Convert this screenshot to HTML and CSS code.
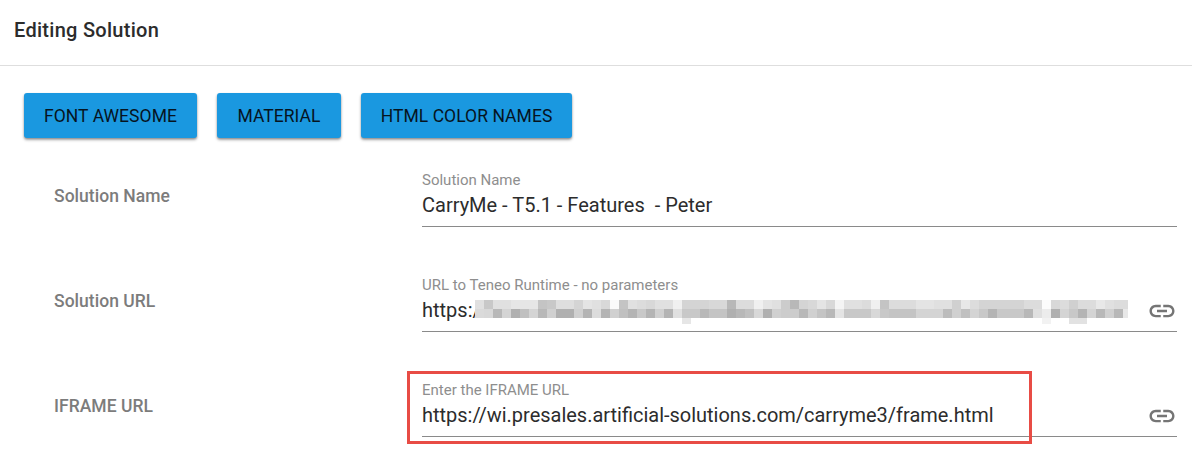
FILE: index.html
```html
<!DOCTYPE html>
<html lang="en">
<head>
<meta charset="utf-8">
<title>Editing Solution</title>
<link rel="stylesheet" href="styles.css">
</head>
<body>
<header class="title-bar"><h1 class="title">Editing Solution</h1></header>
<main class="content">
  <nav class="actions">
    <button class="btn btn-fa">FONT AWESOME</button>
    <button class="btn btn-material">MATERIAL</button>
    <button class="btn btn-colors">HTML COLOR NAMES</button>
  </nav>
  <section class="row">
    <div class="row-label">Solution Name</div>
    <div class="field">
      <div class="hint">Solution Name</div>
      <div class="value"><span class="text">CarryMe - T5.1 - Features&nbsp; - Peter</span></div>
    </div>
  </section>
  <section class="row">
    <div class="row-label">Solution URL</div>
    <div class="field">
      <div class="hint">URL to Teneo Runtime - no parameters</div>
      <div class="value"><span class="text">https:/</span>
        <svg class="mosaic" id="mosaic" width="653" height="24" shape-rendering="crispEdges"></svg>
        <svg class="link" viewBox="0 0 24 24"><path d="M3.9 12c0-1.71 1.39-3.1 3.1-3.1h4V7H7c-2.76 0-5 2.24-5 5s2.24 5 5 5h4v-1.9H7c-1.71 0-3.1-1.39-3.1-3.1zM8 13h8v-2H8v2zm9-6h-4v1.9h4c1.71 0 3.1 1.39 3.1 3.1s-1.39 3.1-3.1 3.1h-4V17h4c2.76 0 5-2.24 5-5s-2.24-5-5-5z"/></svg>
      </div>
    </div>
  </section>
  <section class="row">
    <div class="row-label">IFRAME URL</div>
    <div class="field">
      <div class="hint">Enter the IFRAME URL</div>
      <div class="value"><span class="text url">https://wi.presales.artificial-solutions.com/carryme3/frame.html</span>
        <svg class="link" viewBox="0 0 24 24"><path d="M3.9 12c0-1.71 1.39-3.1 3.1-3.1h4V7H7c-2.76 0-5 2.24-5 5s2.24 5 5 5h4v-1.9H7c-1.71 0-3.1-1.39-3.1-3.1zM8 13h8v-2H8v2zm9-6h-4v1.9h4c1.71 0 3.1 1.39 3.1 3.1s-1.39 3.1-3.1 3.1h-4V17h4c2.76 0 5-2.24 5-5s-2.24-5-5-5z"/></svg>
      </div>
      <div class="highlight"></div>
    </div>
  </section>
</main>
<script src="mosaic.js"></script>
</body>
</html>
```
FILE: styles.css
```css
* { box-sizing: border-box; }
body {
  margin: 0;
  height: 451px;
  overflow: hidden;
  background: #fff;
  color: #2c2c2c;
  font-family: Roboto, "Liberation Sans", sans-serif;
}
.title-bar {
  height: 66px;
  padding: 18px 14px 0;
  border-bottom: 1px solid #dedede;
}
.title {
  margin: 0;
  font-size: 20px;
  line-height: 24px;
  font-weight: 500;
  letter-spacing: .28px;
}
.content { padding: 27px 15px 0 24px; }
.actions { display: flex; gap: 20px; height: 45px; }
.btn {
  padding: 1px 0 0;
  border: 0;
  border-radius: 3px;
  background: #1a98e0;
  color: #06141f;
  font: 400 17.5px/44px Roboto, "Liberation Sans", sans-serif;
  letter-spacing: .05px;
  text-align: center;
  white-space: nowrap;
  box-shadow: 0 2px 3px rgba(0, 0, 0, .32), 0 1px 2px rgba(0, 0, 0, .2);
}
.btn-fa { width: 173px; }
.btn-material { width: 124px; }
.btn-colors { width: 211px; }
.row {
  display: grid;
  grid-template-columns: 368px 1fr;
  height: 105px;
  padding-left: 30px;
}
.row-label {
  padding-top: 46px;
  font-size: 17.5px;
  line-height: 24px;
  font-weight: 500;
  letter-spacing: .03px;
  color: #7c7c7c;
}
.field { position: relative; padding-top: 32px; }
.hint { font-size: 15px; line-height: 20px; color: #8e8e8e; }
.value {
  position: relative;
  display: flex;
  align-items: center;
  justify-content: space-between;
  height: 37px;
  padding-bottom: 6px;
  border-bottom: 1px solid #8a8a8a;
}
.text { font-size: 20px; line-height: 30px; white-space: nowrap; }
.url { font-size: 19.98px; }
.link { width: 30px; height: 30px; margin-top: 2px; fill: #757575; }
.mosaic { position: absolute; left: 53px; top: 5px; }
.highlight {
  position: absolute;
  left: -15px;
  top: 23px;
  width: 625px;
  height: 73px;
  border: 3px solid #e84c45;
}
```
FILE: mosaic.js
```js
// Pixelated mask over the hidden part of the URL: one grey level per 9px cell.
const top9 = "e0 c8 e0 e0 e6 e6 e6 c4 c8 de de d4 e4 e0 d8 fa c4 e0 dc d8 e0 e0 f0 d4 d4 d4 d8 d8 b8 dc dc f0 e4 e0 cc b8 d4 d8 e4 d8 f4 e0 e0 dc f0 c4 dc dc dc e4 e4 e0 e0 d0 e8 dc d4 d4 d4 d4 d4 dc dc fc d8 dc d0 dc dc e8 e0 dc dc".split(" ");
const mid9 = "da d8 b8 d4 b0 c0 d4 b8 d0 b0 b0 d0 b4 dc b4 d0 c0 b4 c8 b4 d0 b4 e0 c8 c8 b8 c4 c4 b0 b8 c0 d8 b0 d0 cc cc b8 d0 c4 b8 e4 c8 c8 c8 d8 c8 c4 c4 c4 d4 d4 d4 bc d0 c0 d4 c8 b4 c8 c8 c8 b8 e0 ec b0 d4 c8 b4 d4 b8 d0 b8 e8".split(" ");
const low = { 23: "e6", 63: "f2", 66: "e2", 67: "e2" };
const svg = document.getElementById("mosaic");
function cell(i, y, h, g) {
  const r = document.createElementNS("http://www.w3.org/2000/svg", "rect");
  r.setAttribute("x", i * 9);
  r.setAttribute("y", y);
  r.setAttribute("width", 9);
  r.setAttribute("height", h);
  r.setAttribute("fill", "#" + g + g + g);
  svg.appendChild(r);
}
top9.forEach((g, i) => cell(i, 0, 9, g));
mid9.forEach((g, i) => cell(i, 9, 9, g));
Object.keys(low).forEach(i => cell(+i, 18, 6, low[i]));
```
